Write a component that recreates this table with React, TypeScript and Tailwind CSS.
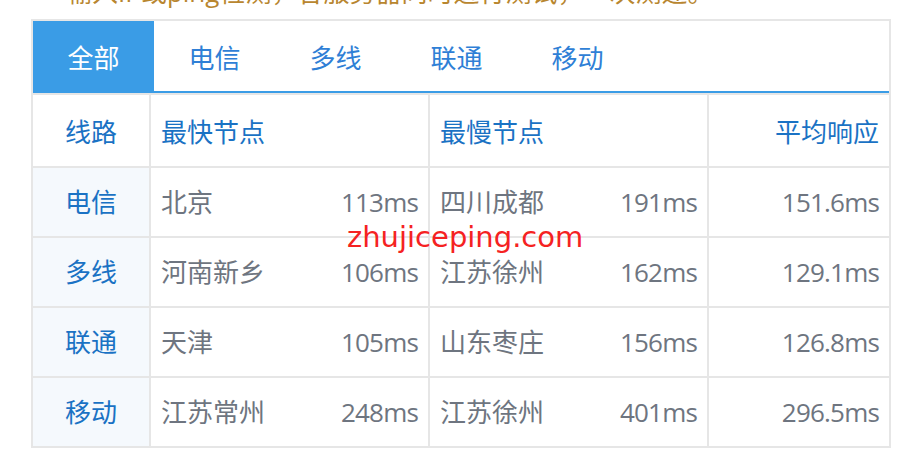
import React from "react";

const tabs = ["全部", "电信", "多线", "联通", "移动"];

const rows = [
  { line: "电信", fast: "北京", fastMs: "113ms", slow: "四川成都", slowMs: "191ms", avg: "151.6ms" },
  { line: "多线", fast: "河南新乡", fastMs: "106ms", slow: "江苏徐州", slowMs: "162ms", avg: "129.1ms" },
  { line: "联通", fast: "天津", fastMs: "105ms", slow: "山东枣庄", slowMs: "156ms", avg: "126.8ms" },
  { line: "移动", fast: "江苏常州", fastMs: "248ms", slow: "江苏徐州", slowMs: "401ms", avg: "296.5ms" },
];

const font = { fontFamily: '"Open Sans", "Noto Sans CJK SC", sans-serif' };

function App() {
  return (
    <div className="relative w-[911px] h-[466px] overflow-hidden bg-white" style={font}>
      {/* cut-off line of text above the widget */}
      <div className="h-[9px] overflow-hidden pl-[66px]">
        <div className="-mt-[23px] text-[26px] leading-[30px] text-[#b8862f] whitespace-nowrap">
          输入IP或ping检测，各服务器同时进行测试，一次测速。
        </div>
      </div>

      <div className="ml-[31px] mt-[10px] w-[860px]">
        {/* tabs */}
        <div className="flex border-2 border-b-0 border-[#e6e6e6]">
          <div className="flex w-full border-b-2 border-[#3a9ce6]">
            {tabs.map((t, i) => (
              <div
                key={t}
                className={`w-[121px] h-[70px] pt-[4px] flex items-center justify-center text-[26px] ${
                  i === 0 ? "bg-[#3a9ce6] text-white" : "text-[#2f7fd6]"
                }`}
              >
                {t}
              </div>
            ))}
          </div>
        </div>

        {/* table */}
        <div className="grid grid-cols-[118px_279px_279px_1fr] border-2 border-b-0 border-[#e6e6e6] text-[26px]">
          <div className="h-[73px] pt-[4px] border-r-2 border-b-2 border-[#e6e6e6] flex items-center justify-center text-[#1a72c4]">线路</div>
          <div className="h-[73px] pt-[4px] border-r-2 border-b-2 border-[#e6e6e6] flex items-center px-[10px] text-[#1a72c4]">最快节点</div>
          <div className="h-[73px] pt-[4px] border-r-2 border-b-2 border-[#e6e6e6] flex items-center px-[10px] text-[#1a72c4]">最慢节点</div>
          <div className="h-[73px] pt-[4px] border-b-2 border-[#e6e6e6] flex items-center justify-end px-[10px] text-[#1a72c4]">平均响应</div>

          {rows.map((r) => (
            <React.Fragment key={r.line}>
              <div className="h-[70px] border-r-2 border-b-2 border-[#e6e6e6] bg-[#f5f9fd] flex items-center justify-center text-[#1a72c4]">
                {r.line}
              </div>
              <div className="h-[70px] border-r-2 border-b-2 border-[#e6e6e6] flex items-center justify-between px-[10px] text-[#6e7580]">
                <span>{r.fast}</span>
                <span className="tracking-[-0.8px]">{r.fastMs}</span>
              </div>
              <div className="h-[70px] border-r-2 border-b-2 border-[#e6e6e6] flex items-center justify-between px-[10px] text-[#6e7580]">
                <span>{r.slow}</span>
                <span className="tracking-[-0.8px]">{r.slowMs}</span>
              </div>
              <div className="h-[70px] border-b-2 border-[#e6e6e6] flex items-center justify-end px-[10px] text-[#6e7580]">
                <span className="tracking-[-0.8px]">{r.avg}</span>
              </div>
            </React.Fragment>
          ))}
        </div>
      </div>

      {/* watermark */}
      <div
        className="absolute left-[347px] top-[217px] text-[29px] leading-[40px] text-[#f52222]"
        style={{ fontFamily: '"DejaVu Sans", sans-serif' }}
      >
        zhujiceping.com
      </div>
    </div>
  );
}

export default App;
